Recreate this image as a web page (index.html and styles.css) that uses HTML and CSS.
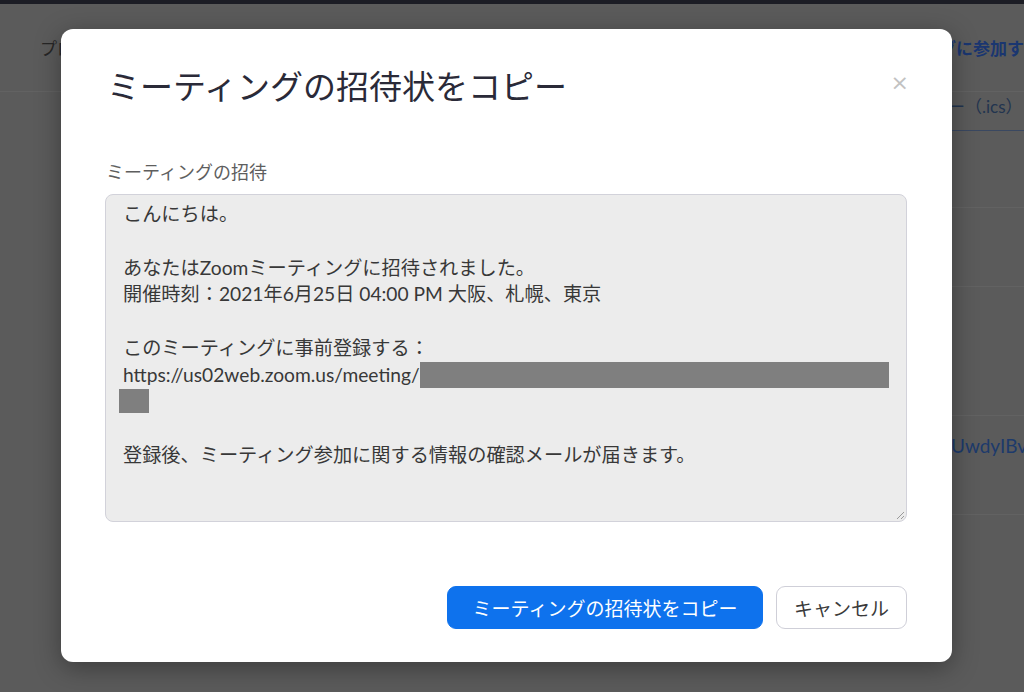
FILE: index.html
```html
<!DOCTYPE html>
<html lang="ja">
<head>
<meta charset="utf-8">
<title>ミーティングの招待状をコピー</title>
<link rel="stylesheet" href="styles.css">
</head>
<body>
<div class="page">
  <div class="topbar"></div>
  <header class="nav">
    <span class="nav-item">プロフィール</span>
    <span class="nav-join">ミーティングに参加する</span>
  </header>
  <section class="rows">
    <div class="row row-ics"><span class="ics">カレンダー（.ics）</span></div>
    <div class="row row-b"></div>
    <div class="row row-c"></div>
    <div class="row row-d"></div>
    <div class="row row-link"><span class="reg-link">UwdyIBvQ</span></div>
  </section>
</div>

<div class="overlay">
  <div class="modal" role="dialog">
    <div class="modal-head">
      <h1 class="modal-title">ミーティングの招待状をコピー</h1>
      <span class="modal-close">×</span>
    </div>
    <div class="field-label">ミーティングの招待</div>
    <div class="invite">
      こんにちは。<br>
      <br>
      あなたはZoomミーティングに招待されました。<br>
      開催時刻：2021年6月25日 04:00 PM 大阪、札幌、東京<br>
      <br>
      このミーティングに事前登録する：<br>
      <span class="nowrap">https://us02web.zoom.us/meeting/<span class="redact redact-a"></span></span><br>
      <span class="redact redact-b"></span><br>
      <br>
      登録後、ミーティング参加に関する情報の確認メールが届きます。
      <svg class="grip" width="10" height="10" viewBox="0 0 10 10"><path d="M9 2 L2 9 M9 6 L6 9" stroke="#9a9a9a" stroke-width="1" fill="none"/></svg>
    </div>
    <div class="actions">
      <button class="btn btn-primary">ミーティングの招待状をコピー</button>
      <button class="btn btn-cancel">キャンセル</button>
    </div>
  </div>
</div>
</body>
</html>
```
FILE: styles.css
```css
* { box-sizing: border-box; margin: 0; padding: 0; }
html, body { width: 1024px; height: 692px; overflow: hidden; }
body {
  background: #5b5b5b;
  font-family: Lato, "Noto Sans CJK JP", sans-serif;
  position: relative;
}

/* background page (dimmed) */
.topbar { height: 4px; background: #1c1d25; }
.nav {
  height: 88px;
  border-bottom: 1px solid #626262;
  display: flex;
  align-items: center;
  padding-left: 40px;
  white-space: nowrap;
}
.nav-item { flex: 0 0 815px; font-size: 17px; color: #262626; }
.nav-join { font-size: 17px; font-weight: 700; color: #1a3670; }

.rows { white-space: nowrap; margin-left: 700px; }
.row { border-bottom: 1px solid #626262; display: flex; align-items: center; }
.row-ics { height: 39px; border-bottom-color: #3a4861; padding-left: 180px; align-items: flex-start; padding-top: 1px; }
.ics { font-size: 17px; color: #22344f; }
.row-b { height: 77px; }
.row-c { height: 79px; }
.row-d { height: 129px; }
.row-link { height: 99px; padding-left: 251px; align-items: flex-start; padding-top: 18px; }
.reg-link { font-size: 19px; color: #1d3a6b; }

/* modal */
.overlay {
  position: absolute;
  inset: 0;
  padding: 29px 0 0 61px;
}
.modal {
  width: 891px;
  height: 633px;
  background: #fff;
  border-radius: 12px;
  box-shadow: 0 6px 26px rgba(0, 0, 0, 0.35);
  padding: 0 45px 33px 44px;
  display: flex;
  flex-direction: column;
}
.modal-head {
  margin-top: 37px;
  height: 40px;
  display: flex;
  justify-content: space-between;
  align-items: flex-start;
}
.modal-title {
  font-weight: 400;
  font-size: 33px;
  line-height: 40px;
  color: #2a2a38;
  margin-left: 2px;
}
.modal-close {
  font-family: "DejaVu Sans", sans-serif;
  font-size: 22px;
  line-height: 22px;
  color: #c2c2c2;
  margin-top: 6px;
  margin-right: -2px;
}
.field-label {
  margin-top: 54px;
  font-size: 18px;
  line-height: 24px;
  color: #5e5e5e;
  margin-left: 1px;
}
.invite {
  position: relative;
  margin-top: 10px;
  height: 328px;
  background: #ececec;
  border: 1px solid #d2d2da;
  border-radius: 8px;
  padding: 6px 14px 6px 17px;
  font-size: 19.2px;
  line-height: 26.8px;
  color: #383838;
}
.nowrap { white-space: nowrap; }
.redact { display: inline-block; background: #7f7f7f; vertical-align: top; }
.redact-a { width: 469px; height: 26px; }
.redact-b { width: 30px; height: 24px; margin-left: -4px; }
.grip { position: absolute; right: 1px; bottom: 1px; }

.actions {
  margin-top: 64px;
  display: flex;
  justify-content: flex-end;
  gap: 13px;
}
.btn {
  height: 43px;
  border-radius: 9px;
  font-family: Lato, "Noto Sans CJK JP", sans-serif;
  font-size: 19px;
}
.btn-primary { width: 316px; background: #0e72ed; border: 1px solid #0e72ed; color: #fff; }
.btn-cancel { width: 131px; background: #fff; border: 1px solid #cfcfd8; color: #3a3a3a; }
```
